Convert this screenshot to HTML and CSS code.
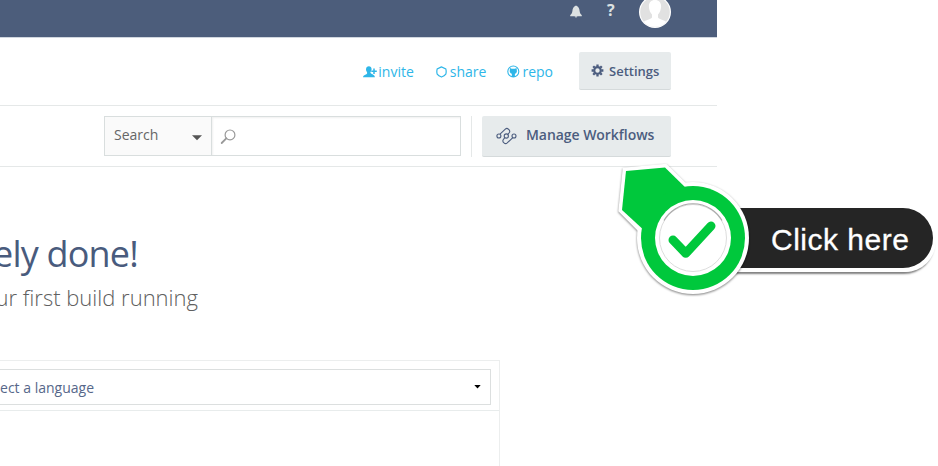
FILE: index.html
```html
<!DOCTYPE html>
<html lang="en">
<head>
<meta charset="utf-8">
<title>Workflows</title>
<link rel="stylesheet" href="styles.css">
</head>
<body>
<div class="page">
  <header class="topbar">
    <svg class="bell" viewBox="0 0 12 14"><path d="M6 .6C3.400 1.800 2.600 3.500 2.400 6 2.200 8 1.400 9 .2 10.300V11.200h11.600v-.9C10.600 9 9.800 8 9.600 6 9.400 3.500 8.600 1.800 6 .6zM4.500 11.500h3L6 12.800z"/></svg>
    <span class="help">?</span>
    <svg class="avatar" viewBox="0 0 32 32"><defs><clipPath id="face"><circle cx="16" cy="16" r="14.800"/></clipPath></defs><circle cx="16" cy="16" r="16" fill="#fff"/><circle cx="16" cy="16" r="14.800" fill="#e1e1e1"/><path clip-path="url(#face)" fill="#fff" d="M16 4c-4 0-6.200 2.600-6.100 6.400.1 3.600 1.400 6.300 3.100 8v3c-1.500 2-6 2-9 5V32h24v-5.600c-3-3-7.500-3-9-5v-3c1.700-1.700 3-4.400 3.100-8C22.200 6.600 20 4 16 4z"/></svg>
  </header>
  <div class="actions">
    <a class="link invite"><svg width="14" height="12" viewBox="0 0 14 12"><path fill="currentColor" d="M3 3.500C3 1.200 4.300.3 5.900.3S8.600 1.300 8.600 3.200C8.600 4.900 7.400 5.400 7.400 6.800 8.200 8.600 11.700 8.100 11.900 11.300H0C.2 8.800 3.800 9 4.200 7 4.300 5.800 3 5.300 3 3.500z"/><path d="M8.300 5.200h5.500M11 2.500v5.500" stroke="currentColor" stroke-width="1.500"/></svg>invite</a>
    <a class="link share"><svg width="12" height="12" viewBox="0 0 12 12"><path d="M5.500.9L1.200 2.900C.7 4.700.7 6.500 1.200 8.200 2.300 9.700 4 10.500 5.500 11 7 10.500 8.700 9.700 9.800 8.200c.5-1.700.5-3.500 0-5.300z" fill="none" stroke="currentColor" stroke-width="1.200"/></svg>share</a>
    <a class="link repo"><svg width="13" height="13" viewBox="0 0 13 13"><circle cx="6.300" cy="6.500" r="5.500" fill="none" stroke="currentColor" stroke-width="1.100"/><path fill="currentColor" d="M3 3l1.700.8h3.200L9.600 3l.3 3.400C9.500 8 8.700 8.400 7.900 8.700V12H4.800V8.700C3.700 8.400 3 7.700 2.700 6.400z"/></svg>repo</a>
    <button class="button settings"><svg width="13" height="13" viewBox="0 0 13 13" fill="none" stroke="currentColor"><circle cx="6.500" cy="6.500" r="3.300" stroke-width="2.200"/><path d="M6.500.6v2M6.500 10.400v2M.6 6.500h2M10.400 6.500h2M2.200 2.200l1.500 1.500M9.300 9.300l1.500 1.500M10.800 2.200L9.300 3.700M3.700 9.300L2.200 10.800" stroke-width="2.300"/></svg>Settings</button>
  </div>
  <div class="toolbar">
    <div class="search">
      <div class="scope"><span>Search</span><svg width="10" height="6" viewBox="0 0 10 6"><path d="M0 .3h10L5 5.300z" fill="#555"/></svg></div>
      <div class="field"><svg width="16" height="16" viewBox="0 0 16 16" fill="none" stroke="#999"><circle cx="10" cy="5.900" r="4.900" stroke-width="1.200"/><path d="M6.300 9.300L1.700 14" stroke-width="1.800" stroke-linecap="round"/></svg></div>
    </div>
    <div class="manage-wrap">
      <button class="button manage"><svg width="21" height="18" viewBox="0 0 21 18" fill="none" stroke="currentColor" stroke-width="1.100"><circle cx="2.900" cy="9" r="2"/><circle cx="10.300" cy="9" r="2.100"/><circle cx="18" cy="9" r="2"/><path d="M4 7.200L9.300 2.100Q11 .7 12.500 2.300 14.400 3.700 13.400 5.500L11.800 7.400M8.800 10.600L7.200 12.800Q6.200 14.400 8 15.900 9.600 17.300 11.200 15.900L16.800 10.700"/></svg><span>Manage Workflows</span></button>
    </div>
  </div>
  <main>
    <h1>ely done!</h1>
    <p class="subtitle">ur first build running</p>
    <section class="panel">
      <div class="panel-head"><div class="select"><span>ect a language</span><svg width="7" height="4" viewBox="0 0 7 4"><path d="M.3 0h6.400L3.500 3.500z"/></svg></div></div>
    </section>
  </main>
</div>
<div class="callout">
  <div class="callout-label">Click here</div>
  <svg class="marker" width="150" height="150" viewBox="610 155 150 150">
    <g class="shadowed">
      <path d="M626 171L665 167.500 684 186 641 229 622 210z" fill="#fff" stroke="#fff" stroke-width="7"/>
      <circle cx="693" cy="238" r="56" fill="#fff"/>
    </g>
    <path d="M626 171L665 167.500 690 192 647 233 622 210z" fill="#00c83c"/>
    <circle cx="693" cy="238" r="52" fill="#00c83c"/>
    <circle cx="693" cy="238" r="38" fill="#fff"/>
    <circle cx="693" cy="238" r="33.500" fill="none" stroke="#ddd"/>
    <path d="M664 220.500A33.500 33.500 0 0 1 722 220.500" fill="none" stroke="#aaa" stroke-width="1.200"/>
    <path d="M673 240l12.800 13.300L711 226" fill="none" stroke="#00c83c" stroke-width="9" stroke-linecap="round" stroke-linejoin="round"/>
  </svg>
</div>
</body>
</html>
```

FILE: styles.css
```css
* { box-sizing: border-box; }
body {
  margin: 0;
  height: 466px;
  overflow: hidden;
  background: #fff;
  font-family: "Open Sans", sans-serif;
}
svg { flex: none; }
.page { width: 717px; height: 466px; overflow: hidden; }
.topbar {
  display: flex;
  justify-content: flex-end;
  height: 38px;
  padding-right: 46px;
  background: #4c5d7b;
  border-bottom: 1px solid #d0d6df;
}
.bell { width: 12px; height: 14px; margin: 5px 25px 0 0; fill: #dce1e2; }
.help { width: 9px; margin-right: 23px; color: #dce1e2; font-size: 16px; font-weight: 700; line-height: 21px; }
.avatar { width: 32px; height: 32px; margin-top: -4px; }
.actions {
  display: flex;
  align-items: center;
  justify-content: flex-end;
  height: 68px;
  padding-right: 46px;
  border-bottom: 1px solid #e5e8e8;
}
.link { display: flex; align-items: center; gap: 2px; color: #2eb6e8; font-size: 14px; line-height: 20px; }
.invite { gap: 1px; margin-right: 22px; }
.share { gap: 2px; margin-right: 21px; }
.repo { margin-right: 26px; }
.button {
  display: flex;
  align-items: center;
  padding: 0;
  border: 0;
  border-bottom: 1px solid #d5dadb;
  border-radius: 2px;
  background: #e7ebec;
  color: #4c5d7f;
  font-family: inherit;
  font-weight: 600;
}
.settings { width: 92px; height: 38px; margin-bottom: 1px; padding-left: 12px; gap: 5px; font-size: 13px; }
.toolbar {
  display: flex;
  height: 61px;
  padding: 10px 46px 0 104px;
  border-bottom: 1px solid #e5e8e8;
}
.search { display: flex; width: 357px; height: 40px; border: 1px solid #d9dede; }
.scope {
  display: flex;
  align-items: center;
  justify-content: space-between;
  width: 107px;
  padding: 0 9px 2px;
  border-right: 1px solid #d9dede;
  background: #fafafa;
  color: #666;
  font-size: 14px;
}
.scope span { padding-bottom: 2px; }
.scope svg { margin-top: 5px; }
.field { padding: 12px 8px; flex: 1; box-shadow: inset 1px 1px 2px #f0f0f0; }
.field svg { display: block; }
.manage-wrap { margin-left: 10px; padding-left: 10px; height: 41px; border-left: 1px solid #e5e8e8; }
.manage { width: 189px; height: 41px; padding: 0 0 2px 14px; gap: 9px; font-size: 14px; letter-spacing: -.05px; white-space: nowrap; }
.manage span { padding-bottom: 1px; }
.manage svg { margin-top: 2px; }
h1 {
  display: flex;
  justify-content: flex-end;
  width: 138px;
  margin: 62px 0 0;
  color: #495b7d;
  font-size: 36px;
  font-weight: 400;
  line-height: 50px;
  letter-spacing: -.8px;
  white-space: nowrap;
}
.subtitle {
  display: flex;
  justify-content: flex-end;
  width: 198px;
  margin: 2px 0 0;
  color: #606060;
  font-size: 22px;
  font-weight: 300;
  line-height: 32px;
  white-space: nowrap;
}
.panel { width: 500px; height: 120px; margin-top: 47px; border: solid #eceeee; border-width: 1px 1px 0 0; }
.panel-head { height: 50px; padding: 8px 8px 0 0; border-bottom: 1px solid #e8ecec; }
.select {
  display: flex;
  align-items: center;
  justify-content: space-between;
  height: 36px;
  padding-right: 9px;
  border: solid #dcdfdf;
  border-width: 1px 1px 1px 0;
  color: #56678a;
  font-size: 14px;
}
.select span { display: flex; justify-content: flex-end; width: 94px; white-space: nowrap; }
.callout { position: absolute; left: 610px; top: 155px; width: 328px; height: 150px; }
.callout-label {
  position: absolute;
  left: 100px;
  top: 53px;
  width: 223px;
  height: 60px;
  padding-left: 61px;
  border-radius: 0 30px 30px 0;
  background: #252525;
  box-shadow: 0 4px 0 #fff, 2px 3px 0 1px #fff, 1px 6px 2px rgba(0, 0, 0, .5);
  color: #fff;
  font: 30px/64px "Liberation Sans", sans-serif;
  letter-spacing: .5px;
  -webkit-text-stroke: .3px #fff;
  white-space: nowrap;
}
.marker { position: absolute; left: 0; top: 0; }
.shadowed { filter: drop-shadow(0 1.500px 1px rgba(0, 0, 0, .5)); }
```
